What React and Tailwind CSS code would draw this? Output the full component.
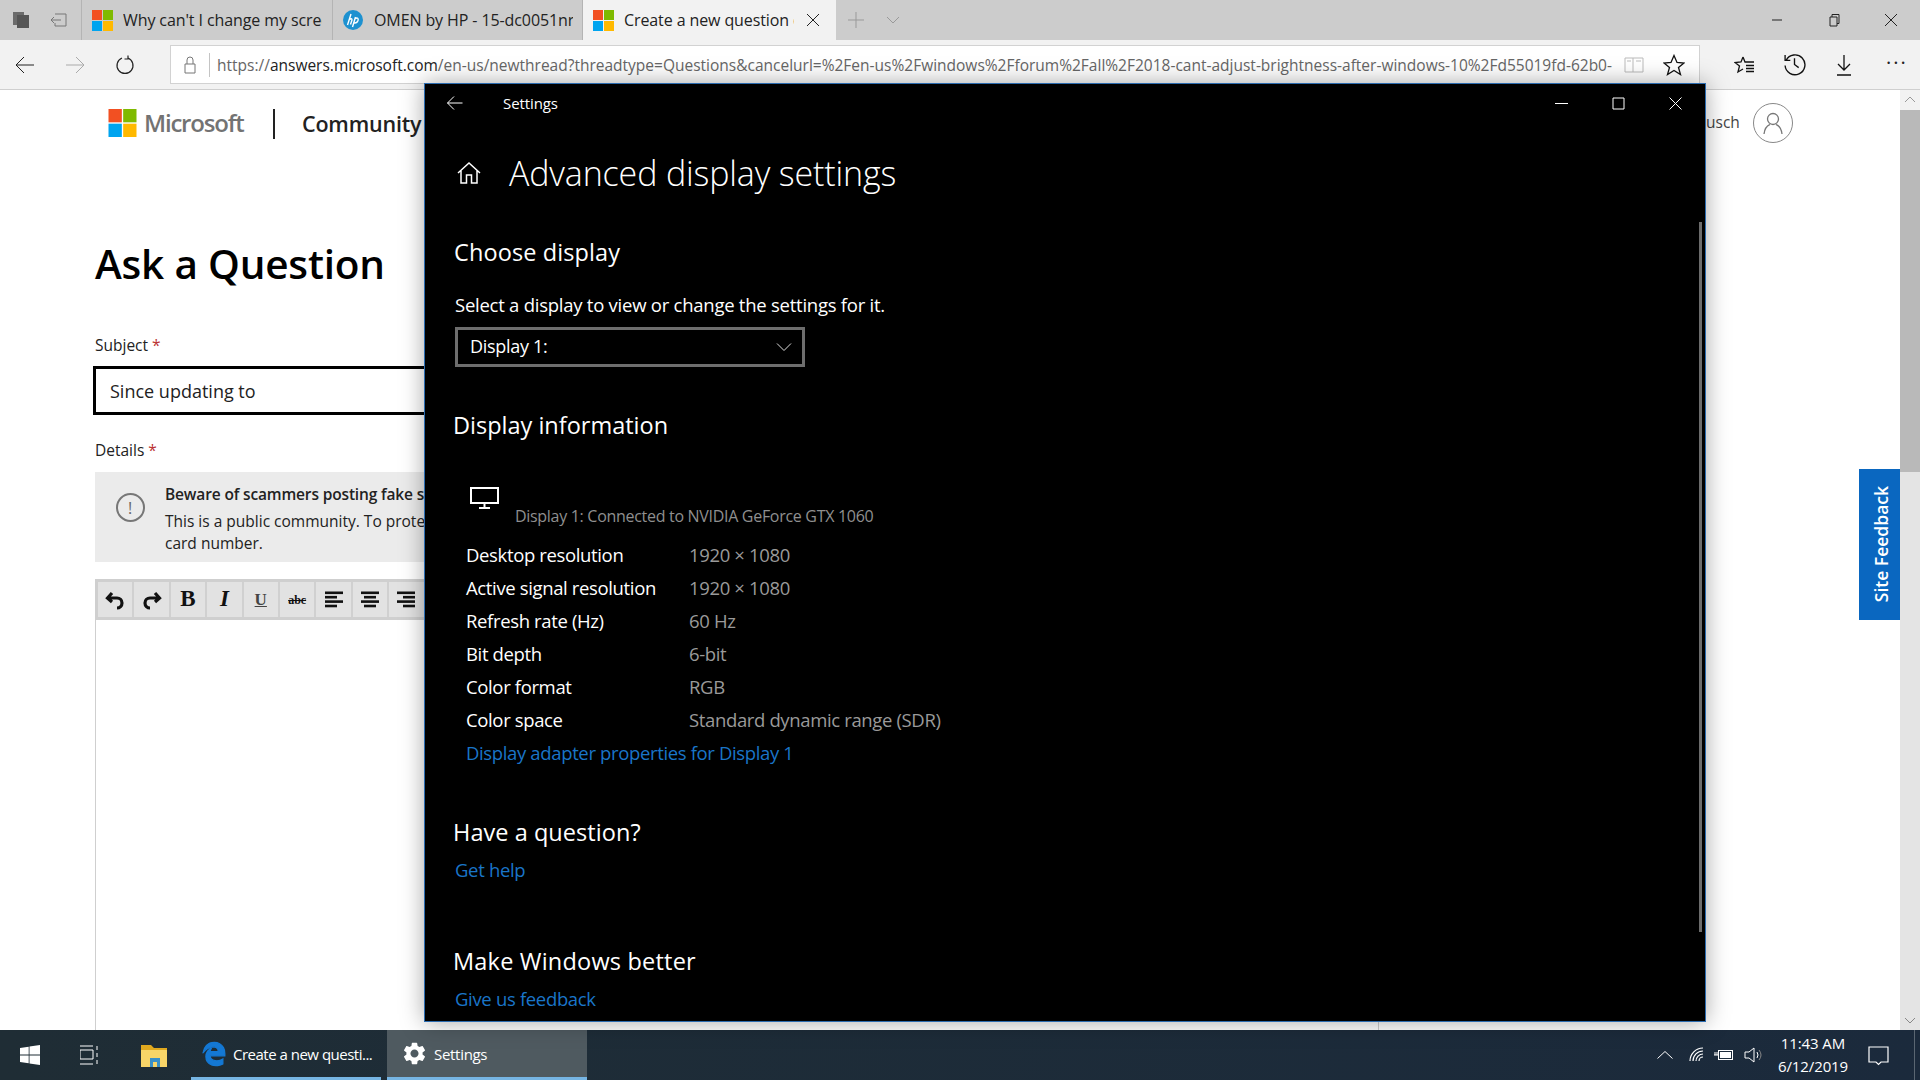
import React from 'react';
import { FaEdgeLegacy } from 'react-icons/fa6';
import { MdSettings } from 'react-icons/md';

const MsLogo = ({ className }) => (
  <svg viewBox="0 0 21 21" className={className}>
    <rect x="0" y="0" width="10" height="10" fill="#f25022" />
    <rect x="11" y="0" width="10" height="10" fill="#7fba00" />
    <rect x="0" y="11" width="10" height="10" fill="#00a4ef" />
    <rect x="11" y="11" width="10" height="10" fill="#ffb900" />
  </svg>
);

const HpLogo = () => (
  <svg viewBox="0 0 20 20" className="w-5 h-5 shrink-0">
    <circle cx="10" cy="10" r="10" fill="#1d91d0" />
    <path d="M8 4 L4.5 15 M6 10 Q9 7.5 9 10 L7.5 14.5 M12.5 7 L9.5 17 M12 8.5 Q16 7 15 10.5 Q14 13.5 11 13" fill="none" stroke="#fff" strokeWidth="1.4" />
  </svg>
);

// thin outline icon, most of the browser and window glyphs are this stroke
const Line = ({ size = 20, box = 20, stroke = '#333', width = 1, className, children }) => (
  <svg viewBox={`0 0 ${box} ${box}`} width={size} height={size} fill="none" stroke={stroke} strokeWidth={width} className={className}>
    {children}
  </svg>
);

const Tab = ({ icon, title, active, width, textWidth }) => (
  <div className={`flex items-center h-10 shrink-0 border-l border-[#b4b4b4] ${width} ${active ? 'bg-[#f2f2f2]' : 'bg-[#cccccc]'}`}>
    <div className="pl-[10px] w-[41px] shrink-0 flex">{icon}</div>
    <div className={`overflow-hidden whitespace-nowrap text-[16px] tracking-[-0.1px] text-[#222] shrink-0 ${textWidth}`}>{title}</div>
    {active && (
      <Line size={14} box={14} stroke="#222" className="ml-3 shrink-0">
        <path d="M1 1 L13 13 M13 1 L1 13" />
      </Line>
    )}
  </div>
);

const TabStrip = () => (
  <div className="h-10 bg-[#cccccc] flex items-center shrink-0">
    <div className="w-[81px] flex items-center pl-[12px] gap-[20px] shrink-0">
      <svg viewBox="0 0 18 18" width="18" height="18">
        <rect x="1" y="1" width="11" height="13" fill="#6b6b6b" />
        <rect x="5" y="4" width="12" height="13" fill="#555" />
      </svg>
      <Line size={18} box={18} stroke="#777">
        <path d="M5 3 H16 V15 H5 V12 M1 9 H11 M4 6 L1 9 L4 12" />
      </Line>
    </div>
    <Tab width="w-[251px]" textWidth="w-[199px]" icon={<MsLogo className="w-[21px] h-[21px]" />} title="Why can't I change my screen" />
    <Tab width="w-[250px]" textWidth="w-[199px]" icon={<HpLogo />} title="OMEN by HP - 15-dc0051nr" />
    <Tab width="w-[254px]" textWidth="w-[170px]" active icon={<MsLogo className="w-[21px] h-[21px]" />} title="Create a new question or" />
    <Line size={18} box={18} stroke="#999" className="ml-[11px]">
      <path d="M9 1 V17 M1 9 H17" />
    </Line>
    <Line size={14} box={14} stroke="#999" className="ml-[21px]">
      <path d="M1 4 L7 10 L13 4" />
    </Line>
    <div className="flex-1" />
    <div className="flex items-center gap-[43px] pr-[22px]">
      <Line size={14} box={14} stroke="#222"><path d="M2 7 H12" /></Line>
      <Line size={14} box={14} stroke="#222"><path d="M3 4 H10 V13 H3 Z M5 4 V1.5 H12 V10.5 H10" /></Line>
      <Line size={14} box={14} stroke="#222"><path d="M1 1 L13 13 M13 1 L1 13" /></Line>
    </div>
  </div>
);

const NavBar = () => (
  <div className="h-[50px] bg-[#f2f2f2] border-b border-[#cfcfcf] flex items-center shrink-0">
    <div className="w-[170px] flex items-center pl-[15px] gap-[30px] shrink-0">
      <Line size={20} stroke="#222"><path d="M1 10 H19 M9 2 L1 10 L9 18" /></Line>
      <Line size={20} stroke="#aaa"><path d="M1 10 H19 M11 2 L19 10 L11 18" /></Line>
      <Line size={20} stroke="#222" width={1.2}>
        <path d="M7 3 A8 8 0 1 0 13 3 M13 0.5 V4 H9.5" />
      </Line>
    </div>
    <div className="w-[1530px] h-[39px] bg-white border border-[#d2d2d2] flex items-center shrink-0">
      <Line size={18} box={18} stroke="#777" className="ml-[10px] shrink-0">
        <path d="M4 8 H14 V17 H4 Z M6 8 V4 A3 3 0 0 1 12 4 V8" />
      </Line>
      <div className="w-px h-[24px] bg-[#c4c4c4] ml-[10px] shrink-0" />
      <div className="w-[1396px] ml-[7px] mt-[3px] shrink-0 overflow-hidden whitespace-nowrap text-[15.5px] text-[#666]">
        https://<span className="text-[#222]">answers.microsoft.com</span>/en-us/newthread?threadtype=Questions&amp;cancelurl=%2Fen-us%2Fwindows%2Fforum%2Fall%2F2018-cant-adjust-brightness-after-windows-10%2Fd55019fd-62b0-
      </div>
      <Line size={20} stroke="#bbb" className="ml-[11px] shrink-0"><path d="M1 3 H9 V17 H1 Z M9 3 H19 V17 H9 M3 6 H7 M12 6 H17" /></Line>
      <Line size={22} box={22} stroke="#111" width={1.3} className="ml-[19px] shrink-0"><path d="M11 1.5 L14 8.5 L21 9 L15.5 13.5 L17.5 20.5 L11 16.5 L4.5 20.5 L6.5 13.5 L1 9 L8 8.5 Z" /></Line>
    </div>
    <div className="ml-[34px] flex items-center gap-[27px]">
      <Line size={22} box={22} stroke="#111" width={1.3}><path d="M9 3 L11 8 H13 M9 3 L7 8 L1 8.5 L5.5 12 L4 18 L9 15 M12 11.5 H20 M12 14.5 H20 M12 17.5 H20 M13 8 H20" /></Line>
      <Line size={23} box={22} stroke="#111" width={1.3}><path d="M3 7 A9.5 9.5 0 1 1 2 12 M2 2 V7 H7 M11 5 V11 L15 14" /></Line>
      <Line size={22} box={22} stroke="#111" width={1.3}><path d="M11 1 V16 M5 10 L11 16 L17 10 M4 21 H18" /></Line>
      <div className="text-[20px] leading-none text-[#222] tracking-[2px] -mt-1 ml-[4px]">···</div>
    </div>
  </div>
);

const Alignment = ({ rows }) => (
  <svg viewBox="0 0 20 18" width="20" height="18" fill="#111">
    {rows.map(([x, w], i) => (
      <rect key={i} x={x} y={i * 4.4 + 0.5} width={w} height="2.6" />
    ))}
  </svg>
);

const tools = [
  <svg viewBox="0 0 20 20" width="20" height="20" fill="none" stroke="#111" strokeWidth="3.2"><path d="M3 8 H12 A5 5 0 0 1 12 18 M7 3 L2.5 8 L7 12" /></svg>,
  <svg viewBox="0 0 20 20" width="20" height="20" fill="none" stroke="#111" strokeWidth="3.2"><path d="M17 8 H8 A5 5 0 0 0 8 18 M13 3 L17.5 8 L13 12" /></svg>,
  <span className="font-['Liberation_Serif',serif] font-bold text-[23px]">B</span>,
  <span className="font-['Liberation_Serif',serif] font-bold italic text-[23px]">I</span>,
  <span className="font-['Liberation_Serif',serif] font-bold text-[17px] underline text-[#444]">U</span>,
  <span className="font-['Liberation_Serif',serif] font-bold text-[12px] line-through">abc</span>,
  <Alignment rows={[[1, 18], [1, 12], [1, 18], [1, 12]]} />,
  <Alignment rows={[[1, 18], [4, 12], [1, 18], [4, 12]]} />,
  <Alignment rows={[[1, 18], [7, 12], [1, 18], [7, 12]]} />,
];

const Page = () => (
  <div className="flex-1 bg-white relative overflow-hidden">
    <div className="h-[58px] pl-[108px] pt-[19px] flex items-start">
      <MsLogo className="w-[29px] h-[28px]" />
      <div className="ml-[7px] w-[129px] text-[#737373] font-semibold text-[24px] leading-[28px] tracking-[-1.2px]">Microsoft</div>
      <div className="w-[2px] h-[30px] bg-[#222]" />
      <div className="ml-[27px] font-semibold text-[#222] text-[21.5px] leading-[30px] tracking-[-0.2px] whitespace-nowrap">Community</div>
    </div>
    <div className="absolute left-[1706px] top-[13px] flex items-center">
      <span className="text-[15.5px] text-[#444]">usch</span>
      <div className="ml-[13px] w-10 h-10 rounded-full border border-[#888] flex items-center justify-center">
        <Line size={24} box={24} stroke="#777" width={1.3}><circle cx="12" cy="8" r="5.5" /><path d="M3 23 C4 15 8 14 9 13.5 M21 23 C20 15 16 14 15 13.5" /></Line>
      </div>
    </div>
    <div className="ml-[95px] w-[1284px] flex flex-col">
      <h1 className="mt-[86px] h-[60px] text-[40.5px] leading-[60px] font-semibold text-black tracking-[-0.2px]">Ask a Question</h1>
      <div className="mt-[39px] h-6 text-[15.5px] leading-6 text-[#222]">Subject <span className="text-[#b33]">*</span></div>
      <div className="mt-[9px] -ml-[2px] h-[49px] border-[3px] border-black flex items-center pl-[14px] text-[18px] text-[#222]">
        <span className="mt-[2px]">Since updating to</span>
      </div>
      <div className="mt-[23px] h-6 text-[15.5px] leading-6 text-[#222]">Details <span className="text-[#b33]">*</span></div>
      <div className="mt-[10px] h-[90px] bg-[#ebebeb] flex">
        <div className="w-[70px] shrink-0 flex justify-center pt-[21px]">
          <div className="w-[29px] h-[29px] rounded-full border-2 border-[#777] flex items-center justify-center text-[16px] leading-none text-[#666]">!</div>
        </div>
        <div className="pt-[11px] text-[15.5px] leading-[22px] text-[#222] whitespace-nowrap">
          <div className="font-semibold h-[27px] tracking-[-0.15px]">Beware of scammers posting fake support numbers here.</div>
          <div>This is a public community. To protect your privacy, do not post any personal information such as your email address, phone number, product key, password, or credit</div>
          <div>card number.</div>
        </div>
      </div>
      <div className="mt-[17px] h-[41px] border-[3px] border-[#cfcfcf] bg-[#e2e2e2] flex">
        {tools.map((tool, i) => (
          <div key={i} className="w-[36.4px] h-[35px] border-r-2 border-[#d0d0d0] flex items-center justify-center shrink-0 text-[#111]">{tool}</div>
        ))}
      </div>
      <div className="h-[500px] border-x border-[#cfcfcf]" />
    </div>
    <div className="absolute right-0 top-[379px] w-[41px] h-[151px] bg-[#0a67c0] flex items-center justify-center pl-[3px]">
      <span className="[writing-mode:vertical-rl] rotate-180 text-white font-semibold text-[17.5px] whitespace-nowrap">Site Feedback</span>
    </div>
  </div>
);

const PageScroll = () => (
  <div className="w-5 shrink-0 bg-[#e4e4e4] flex flex-col">
    <div className="h-5 bg-[#f2f2f2] flex items-center justify-center">
      <Line size={12} box={12} stroke="#999"><path d="M1 8 L6 3 L11 8" /></Line>
    </div>
    <div className="h-[362px] bg-[#b9b9b9]" />
    <div className="flex-1" />
    <div className="h-5 flex items-center justify-center">
      <Line size={12} box={12} stroke="#888"><path d="M1 4 L6 9 L11 4" /></Line>
    </div>
  </div>
);

const infoRows = [
  ['Desktop resolution', '1920 × 1080'],
  ['Active signal resolution', '1920 × 1080'],
  ['Refresh rate (Hz)', '60 Hz'],
  ['Bit depth', '6-bit'],
  ['Color format', 'RGB'],
  ['Color space', 'Standard dynamic range (SDR)'],
];

const SettingsWindow = () => (
  <div className="absolute left-[424px] top-[83px] w-[1282px] h-[939px] bg-black border border-[#2c6cb0] shadow-[0_0_22px_rgba(0,0,0,0.35)] text-white overflow-hidden">
    <div className="h-[38px] flex items-center relative">
      <Line size={16} box={16} stroke="#fff" className="ml-[22px]"><path d="M0.5 8 H15.5 M7 1.5 L0.5 8 L7 14.5" /></Line>
      <div className="ml-[40px] text-[15px] tracking-[-0.1px]">Settings</div>
      <div className="flex-1" />
      <div className="flex items-center gap-[44px] pr-[23px]">
        <Line size={13} box={13} stroke="#fff"><path d="M0 6.5 H13" /></Line>
        <Line size={13} box={13} stroke="#fff"><path d="M1 1 H12 V12 H1 Z" /></Line>
        <Line size={13} box={13} stroke="#fff"><path d="M0.5 0.5 L12.5 12.5 M12.5 0.5 L0.5 12.5" /></Line>
      </div>
    </div>
    <div className="mt-[21px] h-[60px] flex items-center">
      <Line size={24} box={24} stroke="#fff" width={1.5} className="ml-[32px]"><path d="M1 12 L12 2 L23 12 M4 9.5 V22 H9.5 V14 H14.5 V22 H20 V9.5" /></Line>
      <div className="ml-[28px] text-[34px] font-light tracking-[-0.15px] whitespace-nowrap">Advanced display settings</div>
    </div>
    <div className="mt-[33px] ml-[29px] h-8 text-[23.5px] leading-8 tracking-[0.1px]">Choose display</div>
    <div className="mt-[23px] ml-[30px] h-7 text-[18.5px] leading-7 tracking-[-0.25px]">Select a display to view or change the settings for it.</div>
    <div className="mt-[8px] ml-[30px] w-[350px] h-10 border-[3px] border-[#6d6d6d] flex items-center justify-between pl-[12px] pr-[10px] text-[18px] tracking-[-0.3px]">
      <span className="-mt-px">Display 1:</span>
      <Line size={16} box={16} stroke="#ddd"><path d="M1 4.5 L8 11.5 L15 4.5" /></Line>
    </div>
    <div className="mt-[42px] ml-[28px] h-8 text-[23.5px] leading-8">Display information</div>
    <div className="mt-[46px] ml-[45px] h-[22px]">
      <svg viewBox="0 0 30 22" width="30" height="22" fill="none" stroke="#fff">
        <rect x="1" y="1" width="27" height="15" strokeWidth="2" />
        <path d="M14.5 17 V20 M9 21 H20" strokeWidth="2" />
      </svg>
    </div>
    <div className="-mt-[3px] ml-[90px] h-5 text-[16px] leading-5 text-[#8f8f8f] tracking-[-0.3px]">Display 1: Connected to NVIDIA GeForce GTX 1060</div>
    <div className="mt-[12px] ml-[41px] flex flex-col tracking-[-0.36px]">
      {infoRows.map(([label, value]) => (
        <div key={label} className="h-[33px] flex items-center text-[18.5px]">
          <div className="w-[223px]">{label}</div>
          <div className="text-[#9a9a9a]">{value}</div>
        </div>
      ))}
      <div className="h-[33px] flex items-center text-[18.5px] text-[#1a75c8]">Display adapter properties for Display 1</div>
    </div>
    <div className="mt-[47px] ml-[28px] h-8 text-[23.5px] leading-8 tracking-[0.05px]">Have a question?</div>
    <div className="mt-[8px] ml-[30px] h-7 text-[18.5px] leading-7 text-[#1a75c8] tracking-[-0.33px]">Get help</div>
    <div className="mt-[61px] ml-[28px] h-8 text-[23.5px] leading-8 tracking-[0.2px]">Make Windows better</div>
    <div className="mt-[8px] ml-[30px] h-7 text-[18.5px] leading-7 text-[#1a75c8] tracking-[-0.33px]">Give us feedback</div>
    <div className="absolute right-[3px] top-[138px] w-[3px] h-[710px] bg-[#6c6c6c]" />
  </div>
);

const Taskbar = () => (
  <div className="h-[50px] shrink-0 bg-linear-to-r from-[#1f2d35] to-[#1b2a3c] flex items-stretch text-white">
    <div className="w-[80px] flex items-center pl-[20px]">
      <svg viewBox="0 0 20 20" width="20" height="20" fill="#fff">
        <path d="M0 3 L8.7 1.7 V9.5 H0 Z M9.5 1.6 L20 0 V9.5 H9.5 Z M0 10.5 H8.7 V18.3 L0 17 Z M9.5 10.5 H20 V20 L9.5 18.4 Z" />
      </svg>
    </div>
    <div className="w-[60px] flex items-center">
      <Line size={20} stroke="#fff">
        <path d="M0 1 H13 M0 5 H13 V14 H0 Z M0 19 H13 M17 1 V5 M17 8 V12 M17 15 V19" />
      </Line>
    </div>
    <div className="w-[51px] flex items-center">
      <svg viewBox="0 0 28 28" width="28" height="28">
        <path d="M1 4 H11 L14 7 H27 V26 H1 Z" fill="#e0a91f" />
        <rect x="1" y="9" width="26" height="17" fill="#f8d568" />
        <path d="M10 26 V17 H20 V26 H17 V21 H13 V26 Z" fill="#3a90c8" />
      </svg>
    </div>
    <div className="w-[190px] flex items-center pl-[11px] border-b-[3px] border-[#76b5e3]">
      <FaEdgeLegacy className="text-[#1478d4] w-[24px] h-[26px] stroke-[28px]" />
      <span className="ml-[7px] text-[15px] tracking-[-0.5px] mt-[2px]">Create a new questi...</span>
    </div>
    <div className="ml-[6px] w-[200px] flex items-center pl-[14px] bg-[#4f5a60] border-b-[3px] border-[#76b5e3]">
      <MdSettings className="w-[27px] h-[27px]" />
      <span className="ml-[6px] text-[15px] tracking-[-0.3px] mt-[2px]">Settings</span>
    </div>
    <div className="flex-1" />
    <div className="flex items-center">
      <Line size={16} box={16} stroke="#fff"><path d="M0.5 11.5 L8 4.5 L15.5 11.5" /></Line>
      <Line size={16} box={16} stroke="#fff" width={1.2} className="ml-[16px]"><path d="M1 14 A13 13 0 0 1 14 1 M4 14 A10 10 0 0 1 14 4 M7 14 A7 7 0 0 1 14 7 M10 14 A4 4 0 0 1 14 10" /></Line>
      <svg viewBox="0 0 20 12" width="20" height="12" fill="none" stroke="#fff" className="ml-[9px]">
        <rect x="4.5" y="1.5" width="14" height="9" />
        <rect x="6" y="3" width="11" height="6" fill="#fff" stroke="none" />
        <path d="M0 6 H4 M1 3 V6 M3 3 V6" />
      </svg>
      <Line size={20} stroke="#fff" className="ml-[10px]"><path d="M1 7 H5 L10 3 V17 L5 13 H1 Z M13 7 Q15 10 13 13" /><path d="M15 5 Q19 10 15 15" stroke="#888" /></Line>
    </div>
    <div className="ml-[11px] w-[76px] flex flex-col justify-center items-center text-[15px] leading-[23px] tracking-[-0.1px]">
      <div>11:43 AM</div>
      <div>6/12/2019</div>
    </div>
    <div className="ml-[17px] flex items-center">
      <Line size={21} box={21} stroke="#fff" width={1.2}><path d="M1 2 H20 V17 H13 L10.5 19.5 L8 17 H1 Z" /></Line>
    </div>
    <div className="ml-[25px] w-px bg-[#5a6672]" />
    <div className="w-[5px]" />
  </div>
);

const App = () => (
  <div className="relative w-[1920px] h-[1080px] overflow-hidden flex flex-col font-['Open_Sans',sans-serif]">
    <TabStrip />
    <NavBar />
    <div className="flex-1 flex overflow-hidden">
      <Page />
      <PageScroll />
    </div>
    <Taskbar />
    <SettingsWindow />
  </div>
);

export default App;
